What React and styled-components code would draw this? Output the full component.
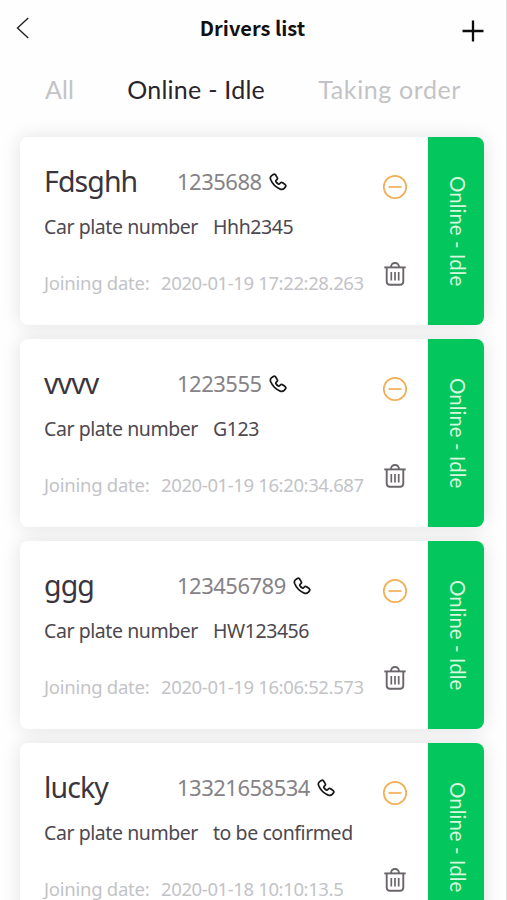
import React from 'react'
import styled, { createGlobalStyle } from 'styled-components'

const bodyFont = '"Noto Sans", "Noto Sans CJK SC", sans-serif'
const tabFont = 'Lato, "Open Sans", sans-serif'
const titleFont = '"Noto Sans CJK SC", "Noto Sans", sans-serif'

const drivers = [
  { name: 'Fdsghh', phone: '1235688', plate: 'Hhh2345', joined: '2020-01-19 17:22:28.263' },
  { name: 'vvvv', phone: '1223555', plate: 'G123', joined: '2020-01-19 16:20:34.687' },
  { name: 'ggg', phone: '123456789', plate: 'HW123456', joined: '2020-01-19 16:06:52.573' },
  { name: 'lucky', phone: '13321658534', plate: 'to be confirmed', joined: '2020-01-18 10:10:13.5' },
]

const BackIcon = () => (
  <svg width="14" height="22" viewBox="0 0 14 22" fill="none" stroke="#222" strokeWidth="1.4">
    <path d="M12.2 1 1.5 11l10.7 10" />
  </svg>
)

const PlusIcon = () => (
  <svg width="22" height="22" viewBox="0 0 22 22" fill="none" stroke="#0c0c0c" strokeWidth="2.3">
    <path d="M11 .5v21M.5 11h21" />
  </svg>
)

const PhoneIcon = () => (
  <svg width="18" height="18" viewBox="0 0 24 24" fill="none" stroke="#161616" strokeWidth="2.3" strokeLinejoin="round">
    <path d="M8.6 2.3c-.8-.9-2-1-2.9-.3L3.2 3.8C1.7 5 1.5 6.8 2.200 8.700c2.300 5.800 6.700 10.200 12.800 12.800 2 .8 3.900.4 5.200-1l1.700-2c.8-1 .6-2.300-.4-3.100l-3.400-2.400c-1-.7-2.200-.6-3 .3l-.9 1.100c-.5.6-1.200.6-1.800.2-1.300-.8-2.300-1.800-3.100-3-.4-.6-.3-1.300.2-1.800l1-.9c.9-.8 1-2 .3-3z" />
  </svg>
)

const MinusIcon = () => (
  <svg width="26" height="26" viewBox="0 0 26 26" fill="none" stroke="#f3ae55" strokeWidth="1.7">
    <circle cx="13" cy="13" r="11.2" />
    <path d="M6.5 13h13" />
  </svg>
)

const TrashIcon = () => (
  <svg width="22" height="26" viewBox="0 0 22 26" fill="none" stroke="#6b666b" strokeWidth="1.9">
    <path d="M.3 6.4h21.4" />
    <path d="M7 6.200C7 3.400 8.500 2 11 2s4 1.400 4 4.200" />
    <path d="M2.700 6.400v14.200c0 2.100 1.100 3.200 3.200 3.200h10.200c2.100 0 3.200-1.100 3.200-3.200V6.400" />
    <path strokeWidth="1.7" d="M7.300 11v8.500M11 11v8.500M14.700 11v8.500" />
  </svg>
)

const App = () => (
  <>
    <GlobalStyle />
    <Page>
      <TopBar>
        <BackIcon />
        <Title>Drivers list</Title>
        <PlusIcon />
      </TopBar>

      <Tabs>
        <Tab $spacing="0.1px">All</Tab>
        <Tab $active $spacing="0.25px">Online - Idle</Tab>
        <Tab $spacing="0.6px">Taking order</Tab>
      </Tabs>

      <DriverList>
        {drivers.map(driver => (
          <Card key={driver.phone}>
            <Details>
              <NameRow>
                <Name>{driver.name}</Name>
                <Phone>{driver.phone}</Phone>
                <PhoneIcon />
              </NameRow>
              <PlateRow>
                <span>Car plate number</span>
                <span>{driver.plate}</span>
              </PlateRow>
              <DateRow>
                <span>Joining date:</span>
                <DateValue>{driver.joined}</DateValue>
              </DateRow>
            </Details>
            <Actions>
              <MinusIcon />
              <TrashIcon />
            </Actions>
            <Status>Online - Idle</Status>
          </Card>
        ))}
      </DriverList>
    </Page>
  </>
)

const GlobalStyle = createGlobalStyle`
  * {
    box-sizing: border-box;
  }
  body {
    margin: 0;
    overflow: hidden;
    background: #fefefe;
  }
  svg {
    display: block;
    flex: none;
  }
`

const Page = styled.div`
  height: 900px;
  overflow: hidden;
  border-right: 1px solid #dedede;
  background: #fefefe;
  font-family: ${bodyFont};
`

const TopBar = styled.header`
  display: grid;
  grid-template-columns: 22px 1fr 22px;
  align-items: center;
  height: 58px;
  padding: 0 22px 3px 16px;
  svg:last-child {
    margin-top: 6px;
  }
`

const Title = styled.h1`
  margin: 0;
  padding: 1px 0 0 5px;
  text-align: center;
  font: 700 20px/30px ${titleFont};
  color: #111;
`

const Tabs = styled.nav`
  display: flex;
  height: 79px;
  padding: 15px 45px 0 45px;
  justify-content: space-between;
`

const Tab = styled.span`
  font: 400 25px/32px ${tabFont};
  letter-spacing: ${props => props.$spacing};
  white-space: nowrap;
  color: ${props => (props.$active ? '#29242b' : '#c3c3c6')};
`

const DriverList = styled.main`
  display: flex;
  flex-direction: column;
  gap: 14px;
  padding: 0 22px 0 20px;
`

const Card = styled.article`
  display: flex;
  height: 188px;
  flex: none;
  border-radius: 8px;
  background: #fff;
  box-shadow: 0 0 18px rgba(40, 35, 40, 0.13);
`

const Details = styled.div`
  flex: 1;
  padding: 23px 0 0 24px;
  white-space: nowrap;
`

const NameRow = styled.div`
  display: grid;
  grid-template-columns: 133px auto 18px;
  justify-content: start;
  align-items: center;
  height: 42px;
  svg {
    margin: 2px 0 0 7px;
  }
`

const Name = styled.span`
  font-size: 28.5px;
  line-height: 42px;
  letter-spacing: -0.9px;
  color: #3a353c;
`

const Phone = styled.span`
  font-size: 22px;
  line-height: 42px;
  letter-spacing: -0.5px;
  color: #858387;
`

const PlateRow = styled.div`
  display: grid;
  grid-template-columns: 169px auto;
  justify-content: start;
  margin-top: 11px;
  font-size: 19.5px;
  line-height: 28px;
  letter-spacing: -0.43px;
  color: #4d484f;
`

const DateRow = styled.div`
  display: grid;
  grid-template-columns: 117px auto;
  justify-content: start;
  margin-top: 28px;
  font-size: 18.5px;
  line-height: 28px;
  letter-spacing: -0.25px;
  color: #c3c3c7;
`

const DateValue = styled.span`
  letter-spacing: -0.38px;
`

const Actions = styled.div`
  display: flex;
  flex: none;
  flex-direction: column;
  align-items: center;
  justify-content: space-between;
  width: 26px;
  margin-right: 20px;
  padding: 37px 0 38px;
`

const Status = styled.div`
  display: flex;
  flex: none;
  align-items: center;
  justify-content: center;
  width: 56px;
  padding-left: 3px;
  border-radius: 0 8px 8px 0;
  background: #03c65c;
  color: #d5f8df;
  writing-mode: vertical-rl;
  font: 400 20.5px/26px ${tabFont};
`

export default App
